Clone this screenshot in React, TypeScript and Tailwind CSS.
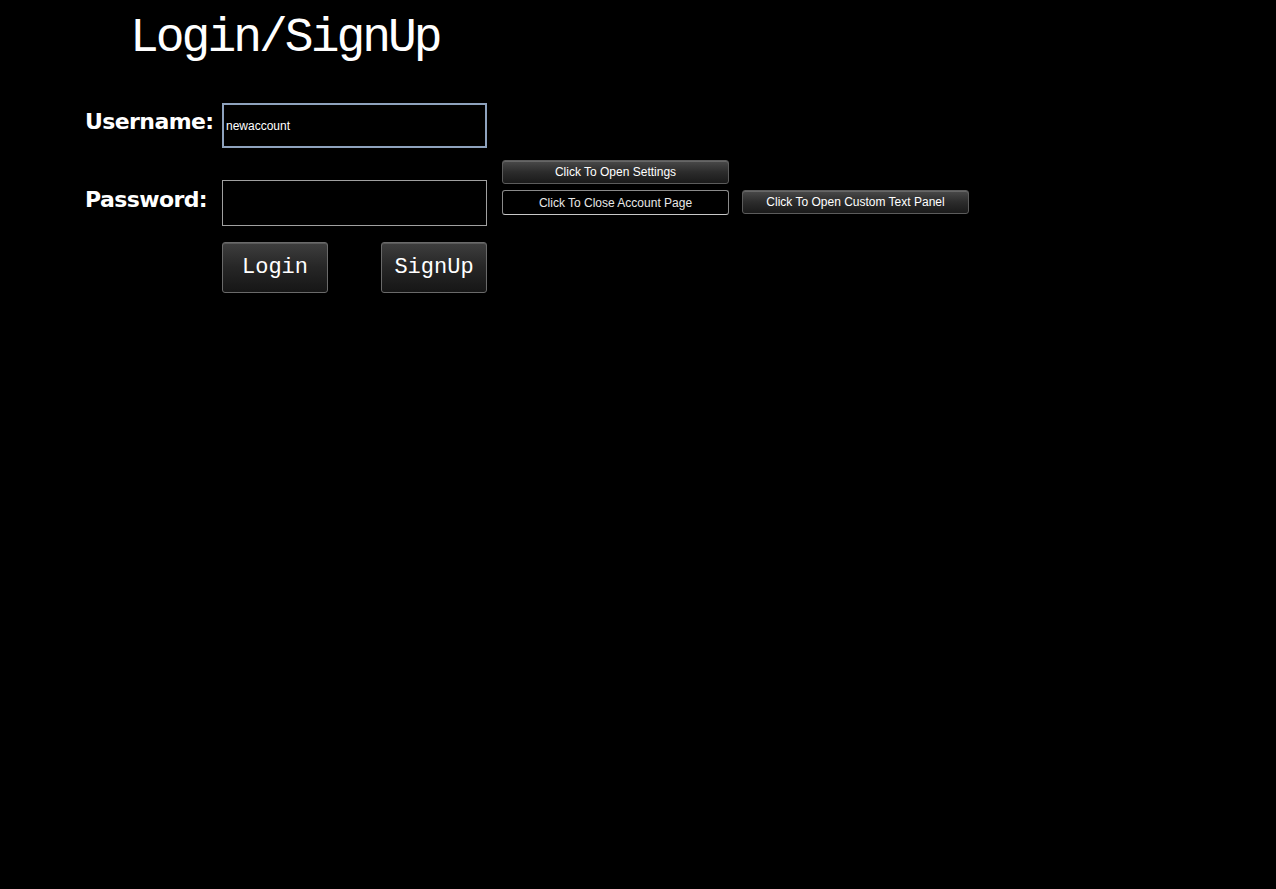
import React, { useState } from 'react';

const serifMono = { fontFamily: '"Liberation Mono", "DejaVu Sans Mono", monospace' };

function BigButton({ label }: { label: string }) {
  return (
    <button
      className="h-[51px] w-[106px] rounded-[3px] border border-[#6a6a6a] bg-gradient-to-b from-[#3e3e3e] via-[#262626] to-[#161616] text-[22px] text-white shadow-[inset_0_1px_0_#5a5a5a]"
      style={serifMono}
    >
      {label}
    </button>
  );
}

function SmallButton({ label, pressed }: { label: string; pressed?: boolean }) {
  return (
    <button
      className={
        pressed
          ? 'h-[25px] w-[227px] rounded-[3px] border border-[#8a8a8a] border-b-[#c8c8c8] bg-black text-[12px] text-[#e8e8e8]'
          : 'h-[24px] w-[227px] rounded-[3px] border border-[#5c5c5c] bg-gradient-to-b from-[#4a4a4a] via-[#2c2c2c] to-[#1a1a1a] text-[12px] text-white shadow-[inset_0_1px_0_#666]'
      }
      style={{ fontFamily: '"Liberation Sans", Arial, sans-serif' }}
    >
      {label}
    </button>
  );
}

export default function App() {
  const [username, setUsername] = useState('newaccount');
  const [password, setPassword] = useState('');

  return (
    <div className="h-[889px] w-full bg-black text-white">
      <h1
        className="pl-[130px] pt-[10px] text-[48px] leading-[56px] tracking-[-3px] text-white"
        style={serifMono}
      >
        Login/SignUp
      </h1>

      <div className="mt-[37px] flex items-start">
        <div
          className="ml-[85px] grid grid-cols-[137px_265px] gap-y-0"
          style={{ fontFamily: '"DejaVu Sans", Tahoma, sans-serif' }}
        >
          <label className="pt-[2px] text-[22px] font-bold leading-[34px] tracking-[-0.6px]">Username:</label>
          <input
            autoFocus
            value={username}
            onChange={e => setUsername(e.target.value)}
            className="h-[45px] w-[265px] border-2 border-[#8ea2bd] bg-black px-[2px] text-[12px] text-white caret-white outline-none"
            style={{ fontFamily: '"Liberation Sans", Arial, sans-serif' }}
          />

          <label className="mt-[32px] pt-[3px] text-[22px] font-bold leading-[34px] tracking-[-0.6px]">Password:</label>
          <input
            type="password"
            value={password}
            onChange={e => setPassword(e.target.value)}
            className="mt-[32px] h-[46px] w-[265px] border border-[#a0a0a0] bg-black px-[3px] text-[12px] text-white outline-none"
          />

          <div />
          <div className="mt-[16px] flex justify-between">
            <BigButton label="Login" />
            <BigButton label="SignUp" />
          </div>
        </div>

        <div className="ml-[15px] mt-[57px] flex flex-col gap-[6px]">
          <SmallButton label="Click To Open Settings" />
          <div className="flex items-start gap-[13px]">
            <SmallButton label="Click To Close Account Page" pressed />
            <SmallButton label="Click To Open Custom Text Panel" />
          </div>
        </div>
      </div>
    </div>
  );
}
